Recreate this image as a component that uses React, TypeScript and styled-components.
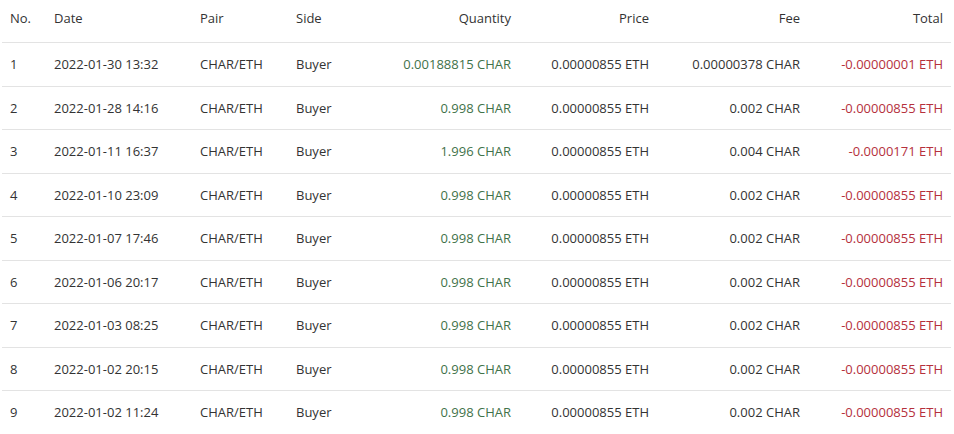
import styled, { createGlobalStyle } from "styled-components";

const GlobalStyle = createGlobalStyle`
  html, body {
    margin: 0;
    padding: 0;
    background: #fff;
  }
  body {
    font-family: "Open Sans", "Liberation Sans", sans-serif;
    color: #333;
  }
`;

const Wrapper = styled.div`
  padding: 0 3px 0 2px;
`;

const Table = styled.table`
  width: 949px;
  border-collapse: collapse;
  table-layout: fixed;
  font-size: 13px;
`;

interface CellProps {
  $align?: "left" | "right";
  $tone?: "plus" | "minus";
}

const HeadCell = styled.th<CellProps>`
  font-weight: 400;
  text-align: ${(props) => props.$align || "left"};
  padding: 9px 8px 15px;
  line-height: 18px;
  border-bottom: 1px solid #e3e3e3;
  white-space: nowrap;
`;

const Cell = styled.td<CellProps>`
  text-align: ${(props) => props.$align || "left"};
  padding: 12px 8px;
  line-height: 18.5px;
  border-bottom: 1px solid #e3e3e3;
  white-space: nowrap;
  color: ${(props) => {
    if (props.$tone == "plus") {
      return "#3f724a";
    }
    if (props.$tone == "minus") {
      return "#b5303c";
    }
    return "#333";
  }};
`;

const columns = [
  { key: "no", label: "No.", width: 44, align: "left" },
  { key: "date", label: "Date", width: 146, align: "left" },
  { key: "pair", label: "Pair", width: 96, align: "left" },
  { key: "side", label: "Side", width: 100, align: "left" },
  { key: "qty", label: "Quantity", width: 131, align: "right" },
  { key: "price", label: "Price", width: 138, align: "right" },
  { key: "fee", label: "Fee", width: 151, align: "right" },
  { key: "total", label: "Total", width: 143, align: "right" },
] as const;

const trades = [
  { date: "2022-01-30 13:32", qty: "0.00188815", fee: "0.00000378", total: "-0.00000001" },
  { date: "2022-01-28 14:16", qty: "0.998", fee: "0.002", total: "-0.00000855" },
  { date: "2022-01-11 16:37", qty: "1.996", fee: "0.004", total: "-0.0000171" },
  { date: "2022-01-10 23:09", qty: "0.998", fee: "0.002", total: "-0.00000855" },
  { date: "2022-01-07 17:46", qty: "0.998", fee: "0.002", total: "-0.00000855" },
  { date: "2022-01-06 20:17", qty: "0.998", fee: "0.002", total: "-0.00000855" },
  { date: "2022-01-03 08:25", qty: "0.998", fee: "0.002", total: "-0.00000855" },
  { date: "2022-01-02 20:15", qty: "0.998", fee: "0.002", total: "-0.00000855" },
  { date: "2022-01-02 11:24", qty: "0.998", fee: "0.002", total: "-0.00000855" },
];

const App = () => {
  return (
    <Wrapper>
      <GlobalStyle />
      <Table>
        <colgroup>
          {columns.map((col) => (
            <col key={col.key} style={{ width: col.width }} />
          ))}
        </colgroup>
        <thead>
          <tr>
            {columns.map((col) => (
              <HeadCell key={col.key} $align={col.align}>
                {col.label}
              </HeadCell>
            ))}
          </tr>
        </thead>
        <tbody>
          {trades.map((t, i) => (
            <tr key={i}>
              <Cell>{i + 1}</Cell>
              <Cell>{t.date}</Cell>
              <Cell>CHAR/ETH</Cell>
              <Cell>Buyer</Cell>
              <Cell $align="right" $tone="plus">
                {t.qty} CHAR
              </Cell>
              <Cell $align="right">0.00000855 ETH</Cell>
              <Cell $align="right">{t.fee} CHAR</Cell>
              <Cell $align="right" $tone="minus">
                {t.total} ETH
              </Cell>
            </tr>
          ))}
        </tbody>
      </Table>
    </Wrapper>
  );
};

export default App;
